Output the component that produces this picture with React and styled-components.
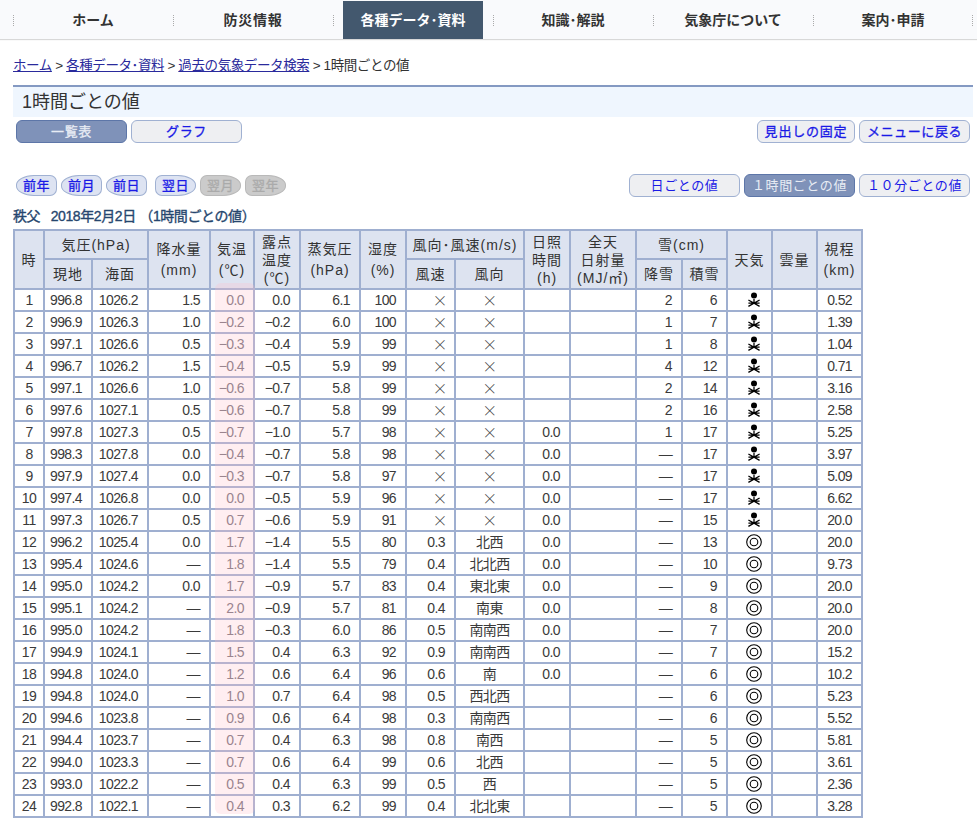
import React from 'react';
import styled, { createGlobalStyle } from 'styled-components';

const GlobalStyle = createGlobalStyle`
  html, body {
    margin: 0;
    padding: 0;
    background: #fff;
    font-family: "Liberation Sans", "Noto Sans CJK JP", sans-serif;
    font-size: 14px;
    color: #333;
  }
`;

const Nav = styled.nav`
  display: flex;
  height: 39px;
  padding-left: 13px;
  background: #f9fafc;
  box-shadow: 0 1px 1px #d8d8d8;
`;

const NavItem = styled.div`
  position: relative;
  width: 160px;
  padding: 1px 10px 0;
  box-sizing: border-box;
  &::before {
    content: '';
    position: absolute;
    left: 0;
    top: 15px;
    height: 11px;
    border-left: 1px dotted #aaa;
  }
  &:last-child::after {
    content: '';
    position: absolute;
    right: 0;
    top: 15px;
    height: 11px;
    border-left: 1px dotted #aaa;
  }
`;

const NavLabel = styled.div`
  height: 38px;
  line-height: 38px;
  text-align: center;
  font-size: 14px;
  font-weight: bold;
  letter-spacing: ${(p) => p.$ls || 0}px;
  color: ${(p) => (p.$active ? '#fff' : '#333')};
  background: ${(p) => (p.$active ? '#43586e' : 'transparent')};
`;

const Content = styled.main`
  padding: 0 4px 0 13px;
`;

const Breadcrumb = styled.div`
  margin-top: 17px;
  height: 20px;
  line-height: 20px;
  font-size: 13.5px;
  letter-spacing: -0.4px;
  a {
    color: #2a2a9c;
    text-decoration: underline;
  }
`;

const TitleBar = styled.h1`
  margin: 9px 0 0;
  height: 30px;
  padding-left: 9px;
  border-top: 2px solid #8499c2;
  background: #eff6fe;
  font-size: 18px;
  font-weight: normal;
  line-height: 30px;
  color: #333;
`;

const ToolRow = styled.div`
  display: flex;
  justify-content: space-between;
  margin-top: 3px;
  padding: 0 3px;
`;

const PairedButtons = styled.div`
  display: flex;
  gap: 4px;
`;

const Button = styled.div`
  width: ${(p) => p.$w || 111}px;
  height: 23px;
  box-sizing: border-box;
  border: 1px solid ${(p) => (p.$on ? '#5d76a8' : '#a0b1d2')};
  border-radius: 6px;
  background: ${(p) => (p.$on ? '#7f92b9' : '#eeeff2')};
  color: ${(p) => (p.$on ? '#e8ecf4' : '#1a1ae6')};
  font-size: 13px;
  -webkit-text-stroke: ${(p) => (p.$heavy ? '0.3px' : '0')};
  letter-spacing: ${(p) => p.$ls ?? 0.6}px;
  line-height: 21px;
  text-align: center;
  white-space: nowrap;
`;

const DateRow = styled.div`
  display: flex;
  justify-content: space-between;
  align-items: center;
  margin-top: 31px;
  padding: 0 3px;
`;

const Pills = styled.div`
  display: flex;
  gap: 4px;
`;

const Pill = styled.div`
  width: 41px;
  height: 21px;
  margin-left: ${(p) => (p.$gap ? 4 : 0)}px;
  box-sizing: border-box;
  border: 1px solid ${(p) => (p.$off ? '#b9b9b9' : '#a0b1d2')};
  border-radius: ${(p) =>
    p.$prev ? '18px 7px 7px 18px / 10px 7px 7px 10px' : '7px 18px 18px 7px / 7px 10px 10px 7px'};
  background: ${(p) => (p.$off ? '#cbcbcb' : '#dde3f2')};
  color: ${(p) => (p.$off ? '#aaa' : '#1a1ae6')};
  font-size: 13px;
  letter-spacing: 0.6px;
  -webkit-text-stroke: 0.3px;
  line-height: 19px;
  text-align: center;
`;

const Caption = styled.div`
  margin-top: 10px;
  height: 18px;
  line-height: 18px;
  font-size: 14px;
  letter-spacing: -0.4px;
  -webkit-text-stroke: 0.35px;
  color: #26466e;
`;

const TableWrap = styled.div`
  position: relative;
  width: 850px;
  margin-top: 4px;
`;

const TempHighlight = styled.div`
  position: absolute;
  left: 202px;
  top: 54px;
  width: 40px;
  height: 531px;
  border-radius: 6px;
  background: rgba(255, 190, 200, 0.26);
  pointer-events: none;
`;

const DataTable = styled.table`
  width: 850px;
  table-layout: fixed;
  border-collapse: collapse;
  border: 2px solid #9fafd0;
  font-size: 14px;
`;

const Th = styled.th`
  box-sizing: border-box;
  padding: 0;
  border: 2px solid #9fafd0;
  background: #dde3f0;
  font-weight: normal;
  line-height: ${(p) => (p.$two ? 21 : 18)}px;
  letter-spacing: 1px;
  text-align: center;
  color: #333;
  height: ${(p) => p.$h || 29}px;
`;

const Td = styled.td`
  box-sizing: border-box;
  height: 22px;
  padding: ${(p) => (p.$center ? '0' : '0 9px 0 0')};
  border: 2px solid #9fafd0;
  line-height: 18px;
  letter-spacing: -0.6px;
  white-space: nowrap;
  text-align: ${(p) => (p.$center ? 'center' : 'right')};
  color: ${(p) => (p.$muted ? '#77707a' : '#3a3a3a')};
`;

const WeatherTd = styled.td`
  box-sizing: border-box;
  height: 22px;
  padding: 0 0 0 8px;
  border: 2px solid #9fafd0;
`;

const Cross = styled.span`
  margin-right: ${(p) => (p.$right ? -2 : 0)}px;
  font-family: "Noto Sans CJK JP", sans-serif;
  font-size: 15px;
  font-weight: 300;
  color: #444;
`;

const IconCell = styled.svg`
  display: block;
  margin: 0 auto;
`;

const SnowIcon = () => (
  <IconCell width="16" height="16" viewBox="0 0 16 16">
    <circle cx="8" cy="3.6" r="3" fill="#000" />
    <path
      d="M2.4 8 13.6 14.4M13.6 8 2.4 14.4M2.4 11.2H13.6M8 7V11.2"
      stroke="#000"
      strokeWidth="1.3"
      fill="none"
    />
  </IconCell>
);

const ClearIcon = () => (
  <IconCell width="16" height="16" viewBox="0 0 16 16">
    <circle cx="8" cy="8" r="7.3" stroke="#000" strokeWidth="1.1" fill="none" />
    <circle cx="8" cy="8" r="3.8" stroke="#000" strokeWidth="1.1" fill="none" />
  </IconCell>
);

const navItems = [
  { label: 'ホーム' },
  { label: '防災情報', ls: 0.8 },
  { label: '各種データ･資料' },
  { label: '知識･解説' },
  { label: '気象庁について' },
  { label: '案内･申請' },
];

const columnWidths = [30, 48, 56, 62, 44, 46, 60, 46, 49, 69, 46, 66, 46, 45, 45, 45, 45];

const rows = [
  ['996.8', '1026.2', '1.5', '0.0', '0.0', '6.1', '100', '×', '×', '', '', '2', '6', 's', '0.52'],
  ['996.9', '1026.3', '1.0', '−0.2', '−0.2', '6.0', '100', '×', '×', '', '', '1', '7', 's', '1.39'],
  ['997.1', '1026.6', '0.5', '−0.3', '−0.4', '5.9', '99', '×', '×', '', '', '1', '8', 's', '1.04'],
  ['996.7', '1026.2', '1.5', '−0.4', '−0.5', '5.9', '99', '×', '×', '', '', '4', '12', 's', '0.71'],
  ['997.1', '1026.6', '1.0', '−0.6', '−0.7', '5.8', '99', '×', '×', '', '', '2', '14', 's', '3.16'],
  ['997.6', '1027.1', '0.5', '−0.6', '−0.7', '5.8', '99', '×', '×', '', '', '2', '16', 's', '2.58'],
  ['997.8', '1027.3', '0.5', '−0.7', '−1.0', '5.7', '98', '×', '×', '0.0', '', '1', '17', 's', '5.25'],
  ['998.3', '1027.8', '0.0', '−0.4', '−0.7', '5.8', '98', '×', '×', '0.0', '', '—', '17', 's', '3.97'],
  ['997.9', '1027.4', '0.0', '−0.3', '−0.7', '5.8', '97', '×', '×', '0.0', '', '—', '17', 's', '5.09'],
  ['997.4', '1026.8', '0.0', '0.0', '−0.5', '5.9', '96', '×', '×', '0.0', '', '—', '17', 's', '6.62'],
  ['997.3', '1026.7', '0.5', '0.7', '−0.6', '5.9', '91', '×', '×', '0.0', '', '—', '15', 's', '20.0'],
  ['996.2', '1025.4', '0.0', '1.7', '−1.4', '5.5', '80', '0.3', '北西', '0.0', '', '—', '13', 'c', '20.0'],
  ['995.4', '1024.6', '—', '1.8', '−1.4', '5.5', '79', '0.4', '北北西', '0.0', '', '—', '10', 'c', '9.73'],
  ['995.0', '1024.2', '0.0', '1.7', '−0.9', '5.7', '83', '0.4', '東北東', '0.0', '', '—', '9', 'c', '20.0'],
  ['995.1', '1024.2', '—', '2.0', '−0.9', '5.7', '81', '0.4', '南東', '0.0', '', '—', '8', 'c', '20.0'],
  ['995.0', '1024.2', '—', '1.8', '−0.3', '6.0', '86', '0.5', '南南西', '0.0', '', '—', '7', 'c', '20.0'],
  ['994.9', '1024.1', '—', '1.5', '0.4', '6.3', '92', '0.9', '南南西', '0.0', '', '—', '7', 'c', '15.2'],
  ['994.8', '1024.0', '—', '1.2', '0.6', '6.4', '96', '0.6', '南', '0.0', '', '—', '6', 'c', '10.2'],
  ['994.8', '1024.0', '—', '1.0', '0.7', '6.4', '98', '0.5', '西北西', '', '', '—', '6', 'c', '5.23'],
  ['994.6', '1023.8', '—', '0.9', '0.6', '6.4', '98', '0.3', '南南西', '', '', '—', '6', 'c', '5.52'],
  ['994.4', '1023.7', '—', '0.7', '0.4', '6.3', '98', '0.8', '南西', '', '', '—', '5', 'c', '5.81'],
  ['994.0', '1023.3', '—', '0.7', '0.6', '6.4', '99', '0.6', '北西', '', '', '—', '5', 'c', '3.61'],
  ['993.0', '1022.2', '—', '0.5', '0.4', '6.3', '99', '0.5', '西', '', '', '—', '5', 'c', '2.36'],
  ['992.8', '1022.1', '—', '0.4', '0.3', '6.2', '99', '0.4', '北北東', '', '', '—', '5', 'c', '3.28'],
];

const App = () => {
  return (
    <>
      <GlobalStyle />
      <Nav>
        {navItems.map((item, i) => (
          <NavItem key={item.label}>
            <NavLabel $active={i === 2} $ls={item.ls}>{item.label}</NavLabel>
          </NavItem>
        ))}
      </Nav>
      <Content>
        <Breadcrumb>
          <a href="#home">ホーム</a> &gt; <a href="#data">各種データ･資料</a> &gt;{' '}
          <a href="#search">過去の気象データ検索</a> &gt; 1時間ごとの値
        </Breadcrumb>
        <TitleBar>1時間ごとの値</TitleBar>
        <ToolRow>
          <PairedButtons>
            <Button $on $heavy>一覧表</Button>
            <Button $heavy>グラフ</Button>
          </PairedButtons>
          <PairedButtons>
            <Button $w={98} $heavy $ls={0.8}>見出しの固定</Button>
            <Button $heavy>メニューに戻る</Button>
          </PairedButtons>
        </ToolRow>
        <DateRow>
          <Pills>
            <Pill $prev>前年</Pill>
            <Pill $prev>前月</Pill>
            <Pill $prev>前日</Pill>
            <Pill $gap>翌日</Pill>
            <Pill $off>翌月</Pill>
            <Pill $off>翌年</Pill>
          </Pills>
          <PairedButtons>
            <Button>日ごとの値</Button>
            <Button $on>１時間ごとの値</Button>
            <Button>１０分ごとの値</Button>
          </PairedButtons>
        </DateRow>
        <Caption>秩父&nbsp;&nbsp;&nbsp;2018年2月2日 （1時間ごとの値）</Caption>
        <TableWrap>
          <DataTable>
            <colgroup>
              {columnWidths.map((w, i) => (
                <col key={i} width={w} />
              ))}
            </colgroup>
            <thead>
              <tr>
                <Th rowSpan={2}>時</Th>
                <Th colSpan={2}>気圧(hPa)</Th>
                <Th rowSpan={2} $two>降水量<br />(mm)</Th>
                <Th rowSpan={2} $two>気温<br />(℃)</Th>
                <Th rowSpan={2}>露点<br />温度<br />(℃)</Th>
                <Th rowSpan={2} $two>蒸気圧<br />(hPa)</Th>
                <Th rowSpan={2} $two>湿度<br />(%)</Th>
                <Th colSpan={2}>風向･風速(m/s)</Th>
                <Th rowSpan={2}>日照<br />時間<br />(h)</Th>
                <Th rowSpan={2}>全天<br />日射量<br />(MJ/㎡)</Th>
                <Th colSpan={2}>雪(cm)</Th>
                <Th rowSpan={2}>天気</Th>
                <Th rowSpan={2}>雲量</Th>
                <Th rowSpan={2} $two>視程<br />(km)</Th>
              </tr>
              <tr>
                <Th $h={30}>現地</Th>
                <Th $h={30}>海面</Th>
                <Th $h={30}>風速</Th>
                <Th $h={30}>風向</Th>
                <Th $h={30}>降雪</Th>
                <Th $h={30}>積雪</Th>
              </tr>
            </thead>
            <tbody>
              {rows.map((row, r) => (
                <tr key={r}>
                  <Td $center>{r + 1}</Td>
                  {row.slice(0, 13).map((value, c) => (
                    <Td key={c} $muted={c === 3} $center={c === 8}>
                      {value === '×' ? <Cross $right={c === 7}>×</Cross> : value}
                    </Td>
                  ))}
                  <WeatherTd>{row[13] === 's' ? <SnowIcon /> : <ClearIcon />}</WeatherTd>
                  <Td />
                  <Td>{row[14]}</Td>
                </tr>
              ))}
            </tbody>
          </DataTable>
          <TempHighlight />
        </TableWrap>
      </Content>
    </>
  );
};

export default App;
